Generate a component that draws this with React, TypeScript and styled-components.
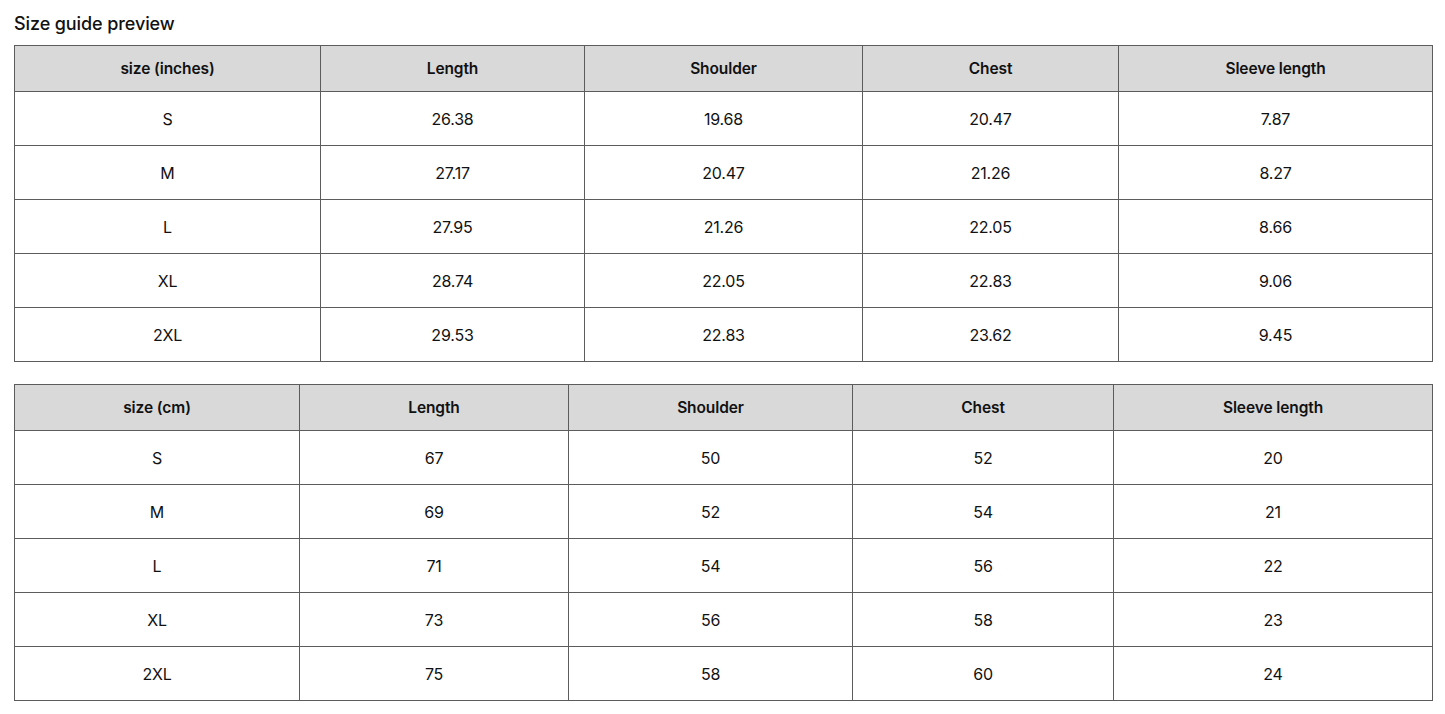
import React from "react";
import styled, { createGlobalStyle } from "styled-components";

const Global = createGlobalStyle`
  html, body { margin: 0; padding: 0; background: #fff; }
  body { font-family: Inter, "Noto Sans", sans-serif; color: #111; }
`;

const Page = styled.div`
  padding: 13px 13px 0 14px;
  display: flex;
  flex-direction: column;
`;

const Title = styled.h1`
  margin: 0 0 10px;
  font-size: 18px;
  font-weight: 500;
  line-height: 22px;
  letter-spacing: -0.1px;
`;

const Tables = styled.div`
  display: flex;
  flex-direction: column;
  gap: 22px;
`;

const Table = styled.table`
  width: 100%;
  border-collapse: collapse;
  table-layout: fixed;
  border: 1px solid #5c5c5c;
`;

const HeadCell = styled.th`
  background: #d9d9d9;
  border: 1px solid #5c5c5c;
  height: 45px;
  padding: 0;
  font-size: 15.5px;
  font-weight: 600;
  text-align: center;
  letter-spacing: -0.1px;
`;

const Cell = styled.td`
  border: 1px solid #5c5c5c;
  height: 53px;
  padding: 0;
  font-size: 16px;
  font-weight: 400;
  text-align: center;
  letter-spacing: -0.2px;
`;

type Spec = {
  unit: string;
  widths: number[];
  rows: string[][];
};

const headers = ["Length", "Shoulder", "Chest", "Sleeve length"];

const specs: Spec[] = [
  {
    unit: "size (inches)",
    widths: [306, 264, 278, 256, 314],
    rows: [
      ["S", "26.38", "19.68", "20.47", "7.87"],
      ["M", "27.17", "20.47", "21.26", "8.27"],
      ["L", "27.95", "21.26", "22.05", "8.66"],
      ["XL", "28.74", "22.05", "22.83", "9.06"],
      ["2XL", "29.53", "22.83", "23.62", "9.45"],
    ],
  },
  {
    unit: "size (cm)",
    widths: [285, 269, 284, 261, 319],
    rows: [
      ["S", "67", "50", "52", "20"],
      ["M", "69", "52", "54", "21"],
      ["L", "71", "54", "56", "22"],
      ["XL", "73", "56", "58", "23"],
      ["2XL", "75", "58", "60", "24"],
    ],
  },
];

const SizeTable = ({ spec }: { spec: Spec }) => (
  <Table>
    <colgroup>
      {spec.widths.map((w, i) => (
        <col key={i} style={{ width: w }} />
      ))}
    </colgroup>
    <thead>
      <tr>
        <HeadCell>{spec.unit}</HeadCell>
        {headers.map((h) => (
          <HeadCell key={h}>{h}</HeadCell>
        ))}
      </tr>
    </thead>
    <tbody>
      {spec.rows.map((r) => (
        <tr key={r[0]}>
          {r.map((c, i) => (
            <Cell key={i}>{c}</Cell>
          ))}
        </tr>
      ))}
    </tbody>
  </Table>
);

export default function App() {
  return (
    <>
      <Global />
      <Page>
        <Title>Size guide preview</Title>
        <Tables>
          {specs.map((s) => (
            <SizeTable key={s.unit} spec={s} />
          ))}
        </Tables>
      </Page>
    </>
  );
}
